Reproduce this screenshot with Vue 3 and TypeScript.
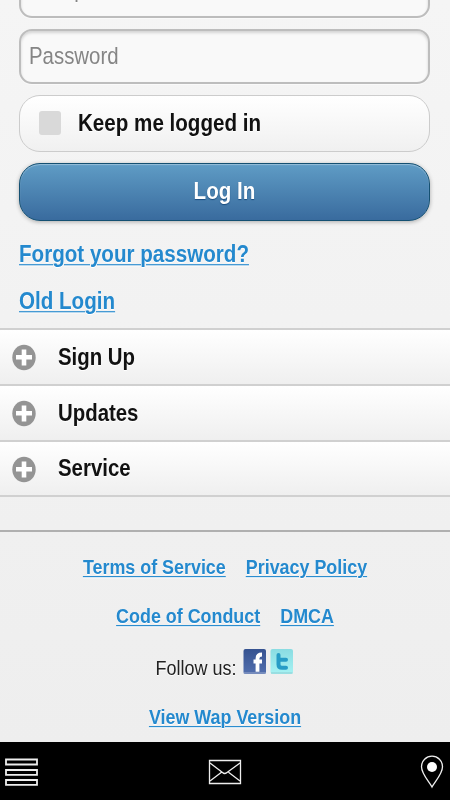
<script setup lang="ts">
const sections: string[] = ['Sign Up', 'Updates', 'Service']
const linkRows: string[][] = [
  ['Terms of Service', 'Privacy Policy'],
  ['Code of Conduct', 'DMCA'],
]
</script>

<template>
  <div class="screen">
    <main class="content">
      <form class="form" @submit.prevent>
        <div class="field first"><span class="tall">Passport/E-mail</span></div>
        <div class="field"><span class="tall">Password</span></div>
        <label class="keep"><i class="box"></i><span class="tall">Keep me logged in</span></label>
        <button class="login" type="submit"><span class="tall">Log In</span></button>
        <a class="link forgot"><span class="tall">Forgot your password?</span></a>
        <a class="link old"><span class="tall">Old Login</span></a>
      </form>
      <ul class="sections">
        <li v-for="name in sections" :key="name">
          <svg width="24" height="27" viewBox="0 0 24 27">
            <ellipse cx="12" cy="13.5" rx="11.7" ry="12.8" fill="#949494" />
            <path d="M12 5.500v16M4 13.200h16" stroke="#fff" stroke-width="4.600" fill="none" />
          </svg>
          <span class="tall">{{ name }}</span>
        </li>
      </ul>
      <footer class="footer">
        <div v-for="(row, i) in linkRows" :key="i" class="row">
          <a v-for="name in row" :key="name" class="link"><span class="tall">{{ name }}</span></a>
        </div>
        <div class="follow">
          <span class="tall">Follow us:</span>
          <svg class="social" width="50" height="27" viewBox="0 0 50 27">
            <defs>
              <linearGradient id="fb" x2="0" y2="1"><stop stop-color="#355290" /><stop offset="1" stop-color="#526fae" /></linearGradient>
              <linearGradient id="tw" x2="0" y2="1"><stop stop-color="#8adce2" /><stop offset="1" stop-color="#a6f2f3" /></linearGradient>
            </defs>
            <rect x=".5" y="1" width="22.5" height="25" rx="2" fill="url(#fb)" />
            <path d="M.8 25h21.8" stroke="#8296c2" stroke-width="1.5" />
            <path d="M14.500 23.800V10.500q0-4 4.500-4M10.500 13.500h8.500" fill="none" stroke="#fff" stroke-width="3.800" />
            <rect x="27.500" y="1" width="22.5" height="25" rx="2" fill="url(#tw)" />
            <path d="M28 25h21.5" stroke="#8ccbd1" stroke-width="1" />
            <path d="M35.5 7v9.5q0 3.3 3.5 3.3h4M35.5 11.7H43" fill="none" stroke="#269cc6" stroke-width="4" stroke-linecap="round" />
          </svg>
        </div>
        <a class="link wap"><span class="tall">View Wap Version</span></a>
      </footer>
    </main>
    <nav class="bar">
      <svg width="34" height="30" viewBox="0 0 34 30" fill="none" stroke="#eee" stroke-width="1.8">
        <path d="M1 2.500h31v5H1zM1 13h31v4.800H1zM1 23h31v4.800H1z" />
      </svg>
      <svg class="mail" width="34" height="26" viewBox="0 0 34 26" fill="none" stroke="#eee" stroke-width="1.3">
        <path d="M1.5 1.5h31v23h-31zM2 4l12.5 9.500q2 2 4.500 0L32 4M2 22l11.500-8.700M32 22l-11.500-8.700" />
      </svg>
      <svg width="24" height="34" viewBox="0 0 24 34">
        <path d="M12 32C9.500 27 1.500 19 1.500 11.700a10.500 10.500 0 0 1 21 0C22.500 19 14.500 27 12 32z" fill="none" stroke="#eee" stroke-width="1.3" />
        <circle cx="12" cy="12" r="5" fill="#fff" />
      </svg>
    </nav>
  </div>
</template>

<style>
body { margin: 0; }
</style>

<style scoped>
* { box-sizing: border-box; }
.screen {
  width: 450px; height: 800px; overflow: hidden;
  display: flex; flex-direction: column;
  font: bold 20.6px/24px "Liberation Sans", Arial, sans-serif;
  color: #111;
}
.content { height: 742px; overflow: hidden; background: linear-gradient(#f5f5f5, #eee); }
.tall { display: inline-block; transform: scaleY(1.13); white-space: nowrap; }
.form { height: 328px; padding: 0 20px 0 19px; display: flex; flex-direction: column; }
.field {
  height: 55px; flex: none; margin-bottom: 11px; padding: 0 8px 1px;
  display: flex; align-items: center;
  border: 2px solid #bdbdbd; border-radius: 13px; background: #f9f9f9;
  box-shadow: inset 0 2px 3px rgba(0, 0, 0, .15), 0 1px #fafafa;
  font-weight: normal; font-size: 20.4px; color: #858585;
}
.first { margin-top: -37px; padding-bottom: 3px; text-shadow: 0 1px #fff; }
.keep {
  height: 57px; flex: none; margin-bottom: 11px; padding: 0 0 2px 19px;
  display: flex; align-items: center; gap: 17px;
  border: 1.5px solid #ccc; border-radius: 21px;
  background: linear-gradient(#fff, #f0f0f0);
  text-shadow: 0 1px #fff;
}
.box { width: 22px; height: 24px; border-radius: 3px; background: #d9d9d9; }
.login {
  height: 58px; flex: none; padding: 0 0 2px; width: 100%;
  border: 1.5px solid #145072; border-radius: 21px;
  background: linear-gradient(#5f9cc5, #396b9e);
  box-shadow: inset 0 1px 1px rgba(255, 255, 255, .35), 0 1px 4px rgba(0, 0, 0, .3);
  color: #fff; font: inherit; text-shadow: 0 1px 1px #194b7e;
}
.link { color: #2489ce; text-shadow: 0 1px #fff; }
.link .tall { text-decoration: underline; text-decoration-thickness: 1px; text-underline-offset: 2px; }
.forgot { margin-top: 21px; height: 24px; }
.old { margin-top: 23px; height: 24px; }
.sections { list-style: none; margin: 0; padding: 0; height: 204px; border-bottom: 2px solid #b0b0b0; }
.sections li {
  height: 56px; padding: 0 0 1px 12px; display: flex; align-items: center; gap: 22px;
  border-top: 2px solid #d0d0d0; background: linear-gradient(#fff, #efefef);
  text-shadow: 0 1px #fff; font-size: 20.4px;
}
.sections li:last-child { border-bottom: 2px solid #d0d0d0; height: 57px; }
.sections svg { margin-top: 2px; }
.footer { font-size: 17.9px; padding-top: 23px; text-align: center; }
.row { height: 24px; margin-bottom: 25px; display: flex; justify-content: center; gap: 20px; }
.row:nth-child(2) { margin-bottom: 27px; }
.follow { height: 28px; display: flex; justify-content: center; gap: 6px; margin-top: -7px; padding-right: 2px; font-weight: normal; font-size: 18px; color: #222; text-shadow: 0 1px #fff; }
.follow .tall { margin-top: 8px; }
.wap { display: block; margin-top: 29px; }
.bar {
  height: 58px; flex: none; padding: 2px 6px 0 5px; background: #000;
  display: flex; justify-content: space-between; align-items: center;
}
.mail { margin-right: 9px; }
</style>
